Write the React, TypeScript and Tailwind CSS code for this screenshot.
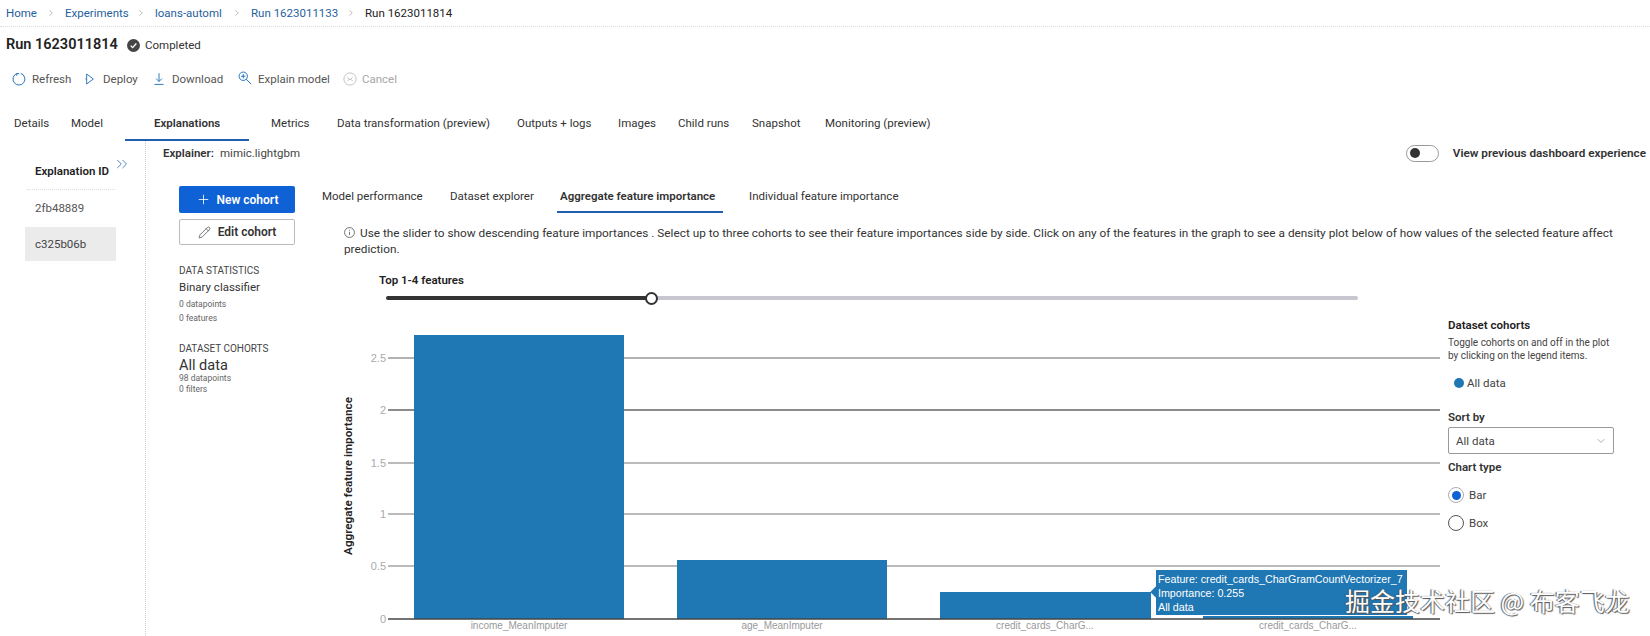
import { ChevronRight, ChevronsRight, ChevronDown, Plus, Pencil } from 'lucide-react';

const crumbs = [
  { label: 'Home', w: 'w-[59px]' },
  { label: 'Experiments', w: 'w-[90px]' },
  { label: 'loans-automl', w: 'w-[96px]' },
  { label: 'Run 1623011133', w: 'w-[114px]' },
];

const runTabs = [
  { label: 'Details', cls: 'ml-[14px] w-[57px]' },
  { label: 'Model', cls: 'w-[83px]' },
  { label: 'Explanations', cls: 'w-[117px] font-semibold' },
  { label: 'Metrics', cls: 'w-[66px]' },
  { label: 'Data transformation (preview)', cls: 'w-[180px]' },
  { label: 'Outputs + logs', cls: 'w-[101px]' },
  { label: 'Images', cls: 'w-[60px]' },
  { label: 'Child runs', cls: 'w-[74px]' },
  { label: 'Snapshot', cls: 'w-[73px]' },
  { label: 'Monitoring (preview)', cls: 'w-[130px]' },
];

const innerTabs = [
  { label: 'Model performance', cls: 'w-[128px]' },
  { label: 'Dataset explorer', cls: 'w-[110px]' },
  { label: 'Aggregate feature importance', cls: 'w-[189px] font-semibold' },
  { label: 'Individual feature importance', cls: 'w-[170px]' },
];

const gridLines = [
  { y: 358, label: '2.5', color: '#666', w: 1 },
  { y: 410, label: '2', color: '#666', w: 1.6 },
  { y: 463, label: '1.5', color: '#777', w: 1 },
  { y: 514, label: '1', color: '#777', w: 1 },
  { y: 566, label: '0.5', color: '#777', w: 1 },
];

const bars = [
  { x: 414, top: 335, label: 'income_MeanImputer' },
  { x: 677, top: 560, label: 'age_MeanImputer' },
  { x: 940, top: 592, label: 'credit_cards_CharG...' },
  { x: 1203, top: 616, label: 'credit_cards_CharG...' },
];

function Chart() {
  return (
    <svg viewBox="340 330 1105 306" className="block w-[1105px] h-[306px] mt-[26px] ml-[18px] shrink-0">
      {gridLines.map(g => (
        <g key={g.y}>
          <line x1="388" x2="1440" y1={g.y} y2={g.y} stroke={g.color} strokeWidth={g.w} />
          <text x="386" y={g.y + 4} textAnchor="end" fontSize="11" fill="#aaa" fontFamily="'Liberation Sans', sans-serif">{g.label}</text>
        </g>
      ))}
      <text x="386" y="623" textAnchor="end" fontSize="11" fill="#aaa" fontFamily="'Liberation Sans', sans-serif">0</text>
      {bars.map(b => (
        <g key={b.x}>
          <rect x={b.x} y={b.top} width={b.x === 940 ? 211 : 210} height={619 - b.top} fill="#1f77b4" />
          <text x={b.x + 105} y="629" textAnchor="middle" fontSize="10" fill="#999" fontFamily="'Liberation Sans', sans-serif">{b.label}</text>
        </g>
      ))}
      <line x1="388" x2="1440" y1="619" y2="619" stroke="#444" strokeWidth="1.6" />
      <text transform="translate(352 476) rotate(-90)" textAnchor="middle" fontSize="11.7" fontWeight="600" fill="#222" fontFamily="Roboto, sans-serif">Aggregate feature importance</text>
    </svg>
  );
}

export default function App() {
  return (
    <div className="relative w-[1650px] h-[636px] overflow-hidden bg-white text-[11.5px] leading-[16px] text-[#333] font-['Roboto',sans-serif]">
      {/* Breadcrumb */}
      <div className="flex items-center h-[27px] pl-[6px] border-b border-dotted border-[#ddd] text-[#1f5f9e]">
        {crumbs.map(c => (
          <div key={c.label} className={`flex items-center shrink-0 ${c.w}`}>
            <span className="whitespace-nowrap">{c.label}</span>
            <ChevronRight className="w-[10px] h-[10px] ml-auto mr-[9px] text-[#777]" strokeWidth={1.2} />
          </div>
        ))}
        <span className="text-[#222] whitespace-nowrap">Run 1623011814</span>
      </div>

      {/* Title */}
      <div className="flex items-center h-[36px] pl-[6px]">
        <span className="text-[14.5px] font-semibold text-[#222] w-[121px]">Run 1623011814</span>
        <svg viewBox="0 0 16 16" className="w-[13px] h-[13px] mr-[5px]">
          <circle cx="8" cy="8" r="8" fill="#444" />
          <path d="M4.5 8.2l2.4 2.4 4.6-5" fill="none" stroke="#fff" strokeWidth="1.6" />
        </svg>
        <span className="text-[#333]">Completed</span>
      </div>

      {/* Toolbar */}
      <div className="flex items-center h-[32px] pl-[12px] text-[#555]">
        <svg viewBox="0 0 16 16" className="w-[14px] h-[14px] mr-[6px]" fill="none" stroke="#1f6fb8" strokeWidth="1.1">
          <path d="M10 1.6a6.8 6.8 0 1 1-4.4.1M5.6 1.7l-.2 2.6M5.6 1.7l2.6.3" />
        </svg>
        <span className="w-[53px]">Refresh</span>
        <svg viewBox="0 0 12 16" className="w-[10px] h-[14px] mr-[8px]" fill="none" stroke="#1f6fb8" strokeWidth="1.1">
          <path d="M2 2l8 6-8 6zM2 8H.5" />
        </svg>
        <span className="w-[51px]">Deploy</span>
        <svg viewBox="0 0 12 16" className="w-[10px] h-[14px] mr-[8px]" fill="none" stroke="#1f6fb8" strokeWidth="1.1">
          <path d="M6 1v10M2.5 7.5L6 11l3.5-3.5M0.5 14.5h11" />
        </svg>
        <span className="w-[66px]">Download</span>
        <svg viewBox="0 0 16 16" className="w-[14px] h-[14px] mr-[6px] -mt-[3px]" fill="none" stroke="#1f6fb8" strokeWidth="1.1">
          <circle cx="6" cy="6" r="4.8" />
          <path d="M9.5 9.5l5.5 5.5M6 3.5v5M3.5 6h5" />
        </svg>
        <span className="w-[85px]">Explain model</span>
        <svg viewBox="0 0 16 16" className="w-[14px] h-[14px] mr-[5px]" fill="none" stroke="#bbb" strokeWidth="1">
          <circle cx="8" cy="8" r="7" />
          <path d="M5 6l3 3 3-3M5 10l3-2 3 2" />
        </svg>
        <span className="text-[#a6a6a6]">Cancel</span>
      </div>

      {/* Run tabs */}
      <div className="relative flex h-[46px] pt-[19px] leading-[18px] text-[#333]">
        {runTabs.map(t => (
          <span key={t.label} className={`${t.cls} shrink-0 whitespace-nowrap`}>{t.label}</span>
        ))}
        <div className="absolute left-[125px] bottom-0 w-[124px] h-[2px] bg-[#1f5fb0]" />
      </div>

      {/* Body */}
      <div className="flex h-[495px]">
        {/* Explanation list */}
        <div className="w-[146px] shrink-0 border-r border-dotted border-[#ccc]">
          <div className="relative ml-[27px] mr-[30px] mt-[22px] h-[27px] border-b border-dotted border-[#ddd] pl-[8px] font-semibold text-[#222] whitespace-nowrap">
            Explanation ID
            <ChevronsRight className="absolute left-[86px] -top-[8px] w-[18px] h-[18px] text-[#1f5fb0]" strokeWidth={1} />
          </div>
          <div className="ml-[35px] mt-[10px] text-[#555]">2fb48889</div>
          <div className="flex items-center ml-[25px] mr-[29px] mt-[11px] h-[34px] pl-[10px] bg-[#ebebeb] text-[#444]">c325b06b</div>
        </div>

        <div className="flex-1 min-w-0">
          {/* Explainer row */}
          <div className="flex items-center h-[24px] pl-[17px] pr-[4px]">
            <span className="font-semibold text-[#333] w-[57px]">Explainer:</span>
            <span className="text-[#444]">mimic.lightgbm</span>
            <div className="ml-auto flex items-center">
              <div className="flex items-center w-[33px] h-[17px] rounded-full border border-[#999] pl-[3px] mr-[14px]">
                <div className="w-[10px] h-[10px] rounded-full bg-[#333]" />
              </div>
              <span className="text-[11.75px] font-semibold text-[#333] whitespace-nowrap">View previous dashboard experience</span>
            </div>
          </div>

          <div className="flex">
            {/* Cohort sidebar */}
            <div className="w-[176px] shrink-0 pl-[33px] pt-[21px]">
              <button className="flex items-center justify-center gap-[6px] w-[116px] h-[27px] rounded-[2px] bg-[#0f62d6] text-[12px] text-white font-semibold">
                <Plus className="w-[15px] h-[15px]" strokeWidth={1.3} />
                New cohort
              </button>
              <button className="flex items-center justify-center gap-[7px] w-[116px] h-[26px] mt-[6px] rounded-[2px] border border-[#bbb] text-[12px] text-[#333] font-semibold">
                <Pencil className="w-[13px] h-[13px]" strokeWidth={1.2} />
                Edit cohort
              </button>
              <div className="mt-[18px] text-[10px] text-[#444]">DATA STATISTICS</div>
              <div className="text-[#333]">Binary classifier</div>
              <div className="mt-[2px] text-[8.5px] leading-[14px] text-[#666]">0 datapoints</div>
              <div className="text-[8.5px] leading-[14px] text-[#666]">0 features</div>
              <div className="mt-[16px] text-[10px] text-[#444]">DATASET COHORTS</div>
              <div className="-mt-[1px] text-[14.5px] leading-[19px] text-[#333]">All data</div>
              <div className="-mt-[2px] text-[8.5px] leading-[11px] text-[#666]">98 datapoints</div>
              <div className="text-[8.5px] leading-[11px] text-[#666]">0 filters</div>
            </div>

            {/* Main panel */}
            <div className="flex-1 min-w-0">
              <div className="relative flex h-[35px] mt-[13px] pt-[9px] leading-[18px] text-[#333]">
                {innerTabs.map(t => (
                  <span key={t.label} className={`${t.cls} shrink-0 whitespace-nowrap`}>{t.label}</span>
                ))}
                <div className="absolute left-[235px] bottom-0 w-[166px] h-[2px] bg-[#1f5fb0]" />
              </div>

              <div className="mt-[12px] pl-[22px] text-[11.8px] text-[#333] whitespace-nowrap">
                <svg viewBox="0 0 12 12" className="inline-block align-[-1px] w-[11px] h-[11px] mr-[5px]" fill="none" stroke="#444" strokeWidth="0.8">
                  <circle cx="6" cy="6" r="5.4" />
                  <path d="M6 5.2v3.6M6 3v1" />
                </svg>
                Use the slider to show descending feature importances . Select up to three cohorts to see their feature importances side by side. Click on any of the features in the graph to see a density plot below of how values of the selected feature affect<br />prediction.
              </div>

              <div className="mt-[15px] ml-[57px] font-semibold text-[#222]">Top 1-4 features</div>
              <div className="relative mt-[4px] ml-[64px] w-[972px] h-[12px] flex items-center">
                <div className="w-[265px] h-[4px] rounded-l-full bg-[#333]" />
                <div className="flex-1 h-[4px] rounded-r-full bg-[#c8c6d0]" />
                <div className="absolute left-[259px] top-0 w-[13px] h-[13px] rounded-full border-2 border-[#333] bg-white" />
              </div>

              <div className="relative flex">
                <Chart />
                <div className="pl-[3px] pt-[13px] w-[205px] shrink-0">
                  <div className="font-semibold text-[#222]">Dataset cohorts</div>
                  <div className="mt-[3px] text-[10px] leading-[13px] text-[#444] whitespace-nowrap">Toggle cohorts on and off in the plot<br />by clicking on the legend items.</div>
                  <div className="flex items-center mt-[13px] ml-[6px] text-[#444]">
                    <div className="w-[10px] h-[10px] rounded-full bg-[#1f77b4] mr-[3px]" />
                    All data
                  </div>
                  <div className="mt-[18px] font-semibold text-[#333]">Sort by</div>
                  <div className="flex items-center justify-between w-[166px] h-[27px] mt-[2px] pl-[7px] pr-[6px] rounded-[2px] border border-[#999] text-[#444]">
                    All data
                    <ChevronDown className="w-[12px] h-[12px] text-[#777]" strokeWidth={1.2} />
                  </div>
                  <div className="mt-[5px] font-semibold text-[#333]">Chart type</div>
                  <div className="flex items-center mt-[12px] text-[#444]">
                    <div className="flex items-center justify-center w-[16px] h-[16px] rounded-full border border-[#aab] mr-[5px]">
                      <div className="w-[9px] h-[9px] rounded-full bg-[#0f62d6]" />
                    </div>
                    Bar
                  </div>
                  <div className="flex items-center mt-[12px] text-[#444]">
                    <div className="w-[16px] h-[16px] rounded-full border border-[#555] mr-[5px]" />
                    Box
                  </div>
                </div>

                {/* Tooltip */}
                <div className="absolute left-[834px] top-[266px] w-[251px] h-[45px] bg-[#1f77b4] pl-[2px] pt-[2px] text-[10.7px] leading-[14px] text-white whitespace-nowrap font-['Liberation_Sans',sans-serif]">
                  <div className="absolute -left-[4px] top-[18px] w-[8px] h-[8px] rotate-45 bg-[#1f77b4]" />
                  <div className="relative">Feature: credit_cards_CharGramCountVectorizer_7</div>
                  <div className="relative">Importance: 0.255</div>
                  <div className="relative">All data</div>
                </div>
              </div>
            </div>
          </div>
        </div>
      </div>

      {/* Watermark */}
      <div className="absolute left-[1345px] top-[585px] text-[25px] leading-[30px] text-white whitespace-nowrap font-['Noto_Sans_CJK_SC',sans-serif] [text-shadow:1px_1px_1px_#555,-1px_0_1px_#555]">
        掘金技术社区 @ 布客飞龙
      </div>
    </div>
  );
}
